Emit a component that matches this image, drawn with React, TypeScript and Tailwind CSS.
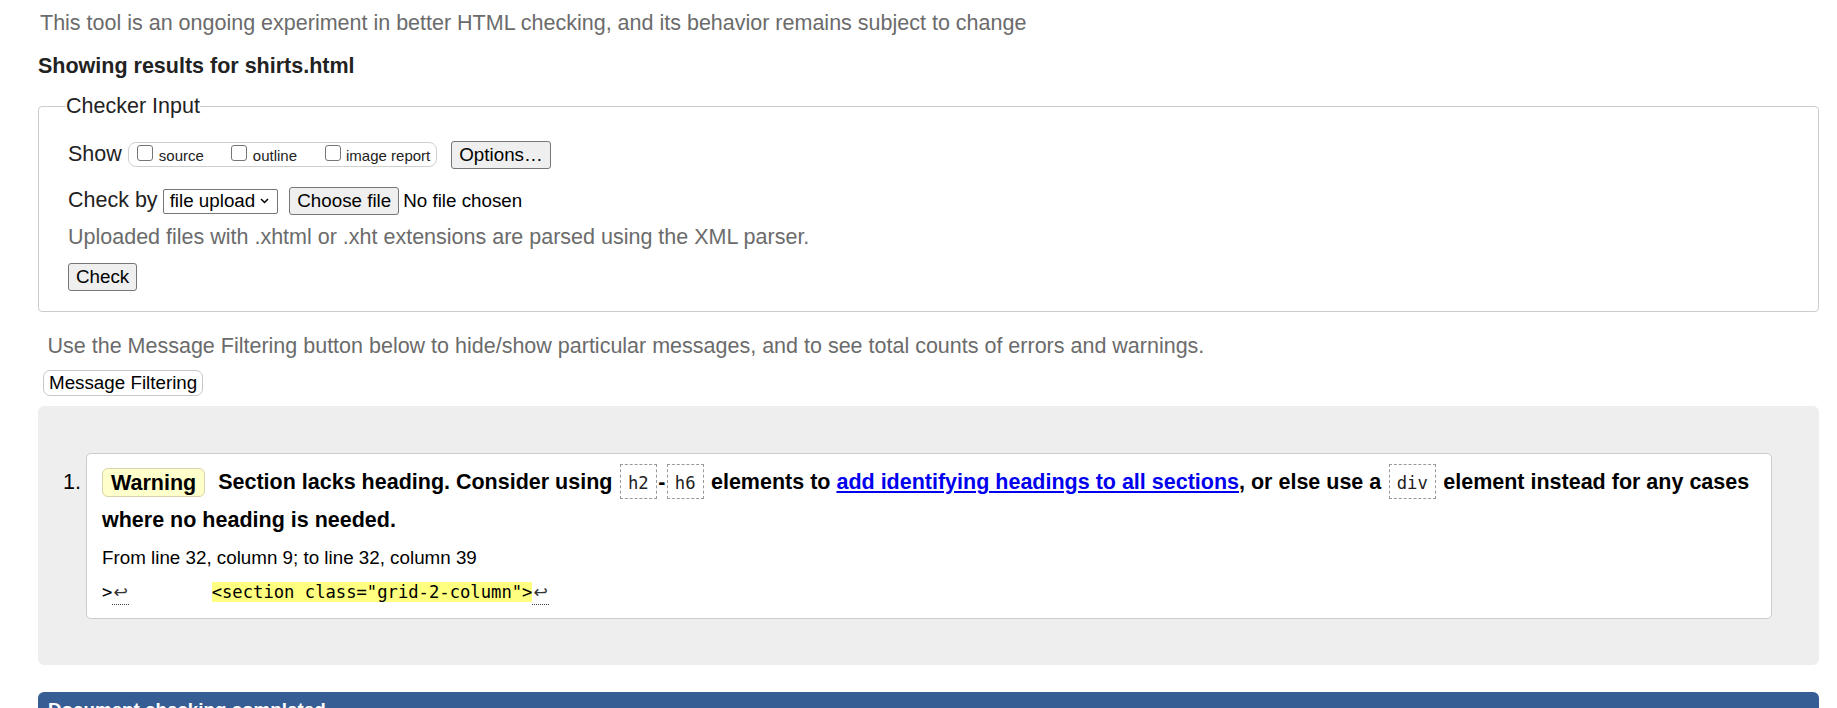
import React from "react";

function Btn({ children, className = "" }: { children: React.ReactNode; className?: string }) {
  return (
    <button
      type="button"
      className={
        "rounded-[3px] border border-[#767676] bg-[#efefef] px-[7px] py-[2px] text-[18.8px] leading-[normal] text-black " +
        className
      }
    >
      {children}
    </button>
  );
}

function Box({ gap }: { gap?: boolean }) {
  return (
    <span
      className={
        gap
          ? "ml-[27.5px] inline-block h-[16px] w-[16px] rounded-[3px] border border-[#767676] bg-white align-baseline"
          : "inline-block h-[16px] w-[16px] rounded-[3px] border border-[#767676] bg-white align-baseline"
      }
    />
  );
}

function Code({ children }: { children: React.ReactNode }) {
  return (
    <span className="mx-[1.5px] border border-dashed border-[#999] px-[7px] pb-[5px] pt-[8px] font-['DejaVu_Sans_Mono','Liberation_Mono',monospace] text-[17.2px] font-normal leading-[20px] text-[#222]">
      {children}
    </span>
  );
}

function Lf() {
  return (
    <span className="inline-block w-[16.5px] border-b border-dotted border-[#444] pb-[2px] text-center font-['DejaVu_Sans',sans-serif] leading-[20px] text-[#333]">
      ↩
    </span>
  );
}

export default function App() {
  return (
    <div className="h-[708px] overflow-hidden bg-white pl-[38px] pr-[18px] pt-[11px] font-['Liberation_Sans',Arial,sans-serif] text-[21.5px] leading-[normal] text-[#222]">
      <p className="ml-[2px] text-[#6b6b6b]">
        This tool is an ongoing experiment in better HTML checking, and its behavior remains subject to change
      </p>
      <h2 className="mt-[17.5px] font-bold">Showing results for shirts.html</h2>

      <fieldset className="mt-[15.5px] rounded-[4px] border border-[#ccc] px-[27px] pb-[20.5px]">
        <legend>Checker Input</legend>

        <div className="ml-[2px] mt-[21.5px] flex items-baseline">
          <span>Show</span>
          <span className="ml-[6.5px] inline-block rounded-[8px] border border-[#cfcfcf] py-[2px] pl-[8px] pr-[6px] text-[15px] text-[#222]">
            <Box />
            <span className="ml-[5.5px]">source</span>
            <Box gap />
            <span className="ml-[5.5px]">outline</span>
            <Box gap />
            <span className="ml-[5.5px]">image report</span>
          </span>
          <Btn className="ml-[14px]">Options…</Btn>
        </div>

        <div className="ml-[2px] mt-[18.5px] flex items-baseline">
          <span>Check by</span>
          <span className="ml-[5px] inline-flex h-[25px] items-center rounded-[2px] border border-[#767676] bg-white pl-[6px] pr-[8px] text-[18.8px] text-black">
            file upload
            <svg width="9" height="6" viewBox="0 0 9 6" className="ml-[5px]">
              <path d="M1 1l3.5 3.5L8 1" fill="none" stroke="#000" strokeWidth="1.5" />
            </svg>
          </span>
          <Btn className="ml-[11px]">Choose file</Btn>
          <span className="ml-[4px] text-[18.8px] text-black">No file chosen</span>
        </div>

        <p className="ml-[2px] mt-[10px] text-[#6b6b6b]">
          Uploaded files with .xhtml or .xht extensions are parsed using the XML parser.
        </p>

        <div className="ml-[2px] mt-[12.5px] flex">
          <Btn>Check</Btn>
        </div>
      </fieldset>

      <p className="ml-[9.5px] mt-[22px] text-[#6b6b6b]">
        Use the Message Filtering button below to hide/show particular messages, and to see total counts of errors and
        warnings.
      </p>
      <div className="ml-[5px] mt-[10.5px] flex">
        <button
          type="button"
          className="rounded-[7px] border border-[#c8c8c8] bg-white px-[5px] py-[1px] text-[18.8px] leading-[normal] text-black"
        >
          Message Filtering
        </button>
      </div>

      <div className="mt-[10.5px] flex rounded-[6px] bg-[#eeeeee] pb-[46px] pl-[25px] pr-[47px] pt-[47px]">
        <span className="mt-[10px] w-[23px] shrink-0 leading-[38px] text-black">1.</span>
        <div className="flex-1 rounded-[5px] border border-[#cccccc] bg-white pb-[13px] pl-[15px] pr-[16px] pt-[9px] text-black">
          <p className="font-bold leading-[38px]">
            <span className="mr-[7px] rounded-[6px] border border-[#d8d5ac] bg-[#ffffcc] px-[8px] py-[1.5px]">Warning</span>{" "}
            Section lacks heading. Consider using <Code>h2</Code>-<Code>h6</Code> elements to{" "}
            <a href="#" className="text-[#0000ee] underline">
              add identifying headings to all sections
            </a>
            , or else use a <Code>div</Code> element instead for any cases where no heading is needed.
          </p>
          <p className="mt-[8px] text-[18.8px]">From line 32, column 9; to line 32, column 39</p>
          <p className="mt-[11px] whitespace-pre font-['DejaVu_Sans_Mono','Liberation_Mono',monospace] text-[17.2px] leading-[24px] text-black">
            {">"}
            <Lf />
            {"        "}
            <span className="bg-[#ffff80]">{'<section class="grid-2-column">'}</span>
            <Lf />
          </p>
        </div>
      </div>

      <div className="mt-[27px] rounded-t-[6px] bg-[#375d95] px-[10px] pb-[12px] pt-[6.5px] text-[18.8px] font-bold text-white">
        Document checking completed.
      </div>
    </div>
  );
}
